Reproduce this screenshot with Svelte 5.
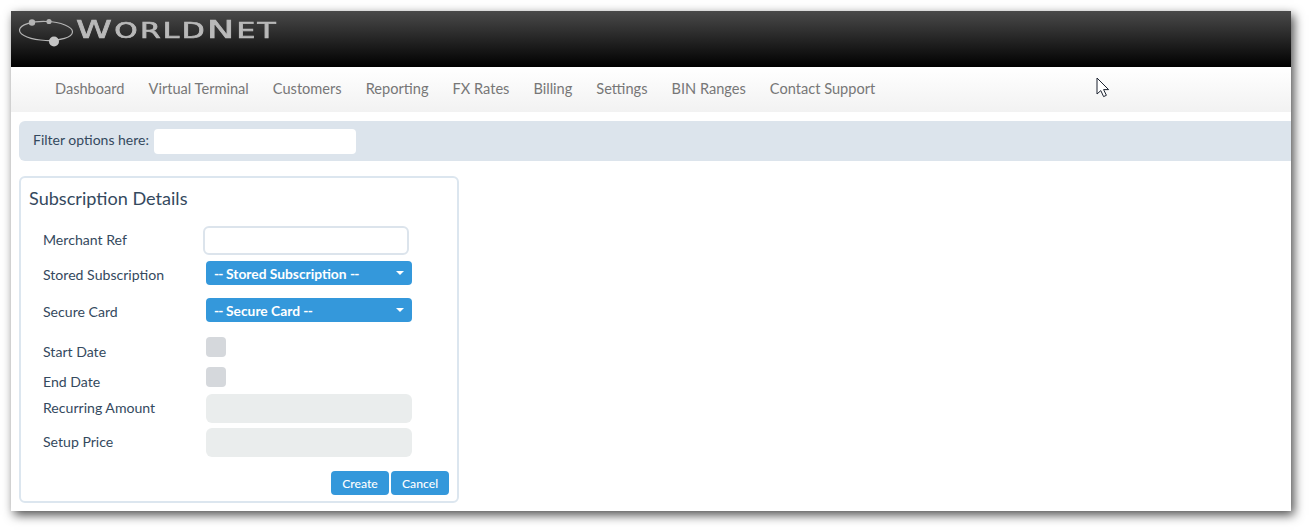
<script lang="ts">
  const navItems = [
    'Dashboard',
    'Virtual Terminal',
    'Customers',
    'Reporting',
    'FX Rates',
    'Billing',
    'Settings',
    'BIN Ranges',
    'Contact Support'
  ];
</script>

<div class="page">
  <div class="window">
    <header class="top">
      <svg class="globe" width="58" height="30" viewBox="0 0 58 30" aria-hidden="true">
        <ellipse cx="27" cy="13" rx="26.5" ry="9.5" transform="rotate(2 27 13)" fill="none" stroke="#b4b4b4" stroke-width="1.2" />
        <circle cx="13" cy="4.5" r="3.2" fill="#b4b4b4" />
        <circle cx="30" cy="3.5" r="2.6" fill="#b4b4b4" />
        <circle cx="35" cy="23.5" r="5" fill="#c4c4c4" />
      </svg>
      <span class="brand"><b>W</b>ORLD<b>N</b>ET</span>
    </header>

    <nav class="nav">
      {#each navItems as item}
        <a href="#top">{item}</a>
      {/each}
    </nav>

    <div class="filter">
      <label for="filter">Filter options here:</label>
      <input id="filter" type="text" />
    </div>

    <section class="card">
      <h2>Subscription Details</h2>
      <div class="form">
        <span class="lbl">Merchant Ref</span>
        <input class="text" type="text" />

        <span class="lbl">Stored Subscription</span>
        <button class="select" type="button"><span class="dash">--</span> Stored Subscription <span class="dash">--</span><i class="caret"></i></button>

        <span class="lbl">Secure Card</span>
        <button class="select" type="button"><span class="dash">--</span> Secure Card <span class="dash">--</span><i class="caret"></i></button>

        <span class="lbl low">Start Date</span>
        <span class="check"></span>

        <span class="lbl low">End Date</span>
        <span class="check"></span>

        <span class="lbl">Recurring Amount</span>
        <input class="off" type="text" disabled />

        <span class="lbl">Setup Price</span>
        <input class="off" type="text" disabled />
      </div>
      <div class="actions">
        <button class="btn" type="button">Create</button>
        <button class="btn" type="button">Cancel</button>
      </div>
    </section>

    <svg class="pointer" width="14" height="21" viewBox="0 0 14 21" aria-hidden="true">
      <path d="M1 1V17L4.8 13.6L7.6 19.6L10.4 18.3L7.6 12.6H12.6Z" fill="#fff" stroke="#1c2330" stroke-width="1" />
    </svg>
  </div>
</div>

<style>
  :global(body) {
    background: #fff;
    font-family: Lato, 'Open Sans', sans-serif;
  }

  .page {
    box-sizing: border-box;
    width: 1310px;
    height: 530px;
    padding: 11px;
    overflow: hidden;
  }

  .window {
    position: relative;
    box-sizing: border-box;
    width: 1280px;
    height: 500px;
    background: #fff;
    box-shadow: 3px 4px 10px rgba(0, 0, 0, 0.7);
  }

  .top {
    display: flex;
    height: 56px;
    padding: 7px 0 0 8px;
    box-sizing: border-box;
    background: linear-gradient(#4a4a4a, #000);
  }

  .globe {
    flex: none;
  }

  .brand {
    display: inline-block;
    height: 36px;
    margin: -6px 0 0 -1px;
    font-family: 'DejaVu Sans', sans-serif;
    font-size: 20.5px;
    line-height: 36px;
    letter-spacing: 1.6px;
    color: #b9b9b9;
    -webkit-text-stroke: 0.7px #b9b9b9;
    transform: scaleX(1.45);
    transform-origin: left center;
    filter: blur(0.4px);
  }

  .brand b {
    font-size: 25px;
    font-weight: 400;
  }

  .nav {
    display: flex;
    gap: 24px;
    height: 45px;
    padding-left: 44px;
    align-items: center;
    background: linear-gradient(#fff, #f2f2f2);
  }

  .nav a {
    margin-top: -2px;
    font-size: 14.6px;
    color: #777;
    text-decoration: none;
  }

  .filter {
    display: flex;
    align-items: center;
    gap: 5px;
    height: 40px;
    margin: 9px 0 0 8px;
    padding-left: 14px;
    background: #dce4ec;
    border-radius: 6px 0 0 6px;
    font-size: 14px;
    color: #34495e;
  }

  .filter label {
    margin-top: -3px;
  }

  .filter input {
    box-sizing: border-box;
    width: 202px;
    height: 25px;
    margin-top: 1px;
    border: 0;
    border-radius: 4px;
    background: #fff;
  }

  .card {
    box-sizing: border-box;
    width: 440px;
    height: 327px;
    margin: 15px 0 0 8px;
    padding: 0 8px;
    border: 2px solid #dce6ef;
    border-radius: 6px;
    color: #34495e;
  }

  h2 {
    margin: 0;
    height: 48px;
    font-size: 18.1px;
    font-weight: 400;
    line-height: 40px;
  }

  .form {
    display: grid;
    grid-template-columns: 163px 206px;
    grid-template-rows: 35px 37px 39px 30px 27px 34px 34px;
    padding-left: 14px;
  }

  .lbl {
    padding-top: 4px;
    font-size: 14.1px;
    line-height: 20px;
  }

  .lbl.low {
    padding-top: 5px;
  }

  .text {
    box-sizing: border-box;
    width: 206px;
    height: 29px;
    margin-left: -3px;
    border: 2px solid #dce4ec;
    border-radius: 6px;
    background: #fff;
  }

  .select {
    position: relative;
    width: 206px;
    height: 24px;
    padding: 0 0 0 8px;
    border: 0;
    border-radius: 4px;
    background: #3498db;
    color: #fff;
    font: 700 13.8px/26px Lato, sans-serif;
    text-align: left;
  }

  .dash {
    letter-spacing: -0.8px;
  }

  .caret {
    position: absolute;
    top: 10px;
    right: 8px;
    border-top: 4px solid #fff;
    border-left: 4px solid transparent;
    border-right: 4px solid transparent;
  }

  .check {
    display: block;
    width: 20px;
    height: 20px;
    border-radius: 4px;
    background: #d5d8dc;
  }

  .off {
    box-sizing: border-box;
    width: 206px;
    height: 29px;
    border: 0;
    border-radius: 6px;
    background: #eaeded;
  }

  .actions {
    display: flex;
    justify-content: flex-end;
    gap: 2px;
    margin-top: 9px;
  }

  .btn {
    width: 58px;
    height: 24px;
    padding: 0;
    border: 0;
    border-radius: 4px;
    background: #3498db;
    color: #fff;
    font: 500 12.2px/25px Lato, sans-serif;
  }

  .pointer {
    position: absolute;
    left: 1085px;
    top: 66px;
  }
</style>
